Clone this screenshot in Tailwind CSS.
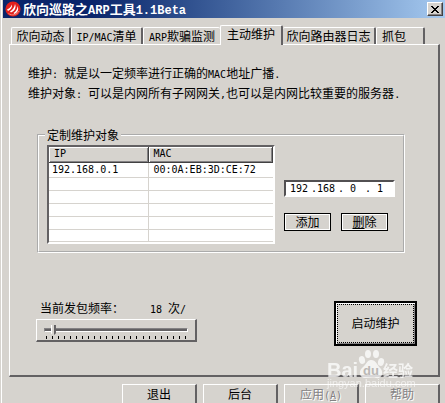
<!DOCTYPE html>
<html lang="zh-CN">
<head>
    <meta charset="UTF-8">
    <meta name="viewport" content="width=device-width, initial-scale=1.0">
    <title>欣向巡路之ARP工具1.1Beta</title>
    <script src="https://cdn.jsdelivr.net/npm/@tailwindcss/browser@4"></script>
</head>
<body class="min-h-screen bg-[#d6d3ce] font-['Noto_Sans_CJK_SC',sans-serif] text-[12px] leading-[14px] text-black">
    <div class="relative ml-px min-h-screen border-l border-white">
        <!-- Title bar -->
        <header class="ml-px flex h-[18px] items-center bg-linear-to-r from-[#0a246a] from-20% to-[#a6caf0] pr-[2px] pl-[2px]">
            <svg class="size-4 shrink-0" viewBox="0 0 16 16" aria-hidden="true">
                <circle cx="8" cy="8" r="7.6" fill="#e0201c"/>
                <path d="M2 8.5C4 8 6 6 7 3.500C7.500 6 6 8.500 3 10ZM5 10.500C8 9 9.500 6 10 3C11.500 6 10 10 6 11.500ZM8.500 12C11 10.500 12.500 8 12.500 5C14 8 13 11.500 9.500 13Z" fill="#fff"/>
                <path d="M3.500 12.500C7 15 12 14 14 10" stroke="#f58a80" fill="none"/>
            </svg>
            <h1 class="ml-[2px] h-[18px] flex-1 text-[13px] leading-[18px] font-bold whitespace-nowrap text-white">欣向巡路之<span class="font-['Liberation_Mono',monospace] text-[12px] leading-[14px]">ARP</span>工具<span class="font-['Liberation_Mono',monospace] text-[12px] leading-[14px]">1.1Beta</span></h1>
            <button aria-label="关闭" class="flex h-[14px] w-4 items-center justify-center border border-t-white border-r-[#424142] border-b-[#424142] border-l-white bg-[#d6d3ce] shadow-[inset_-1px_-1px_#848284]">
                <svg class="h-[7px] w-2" viewBox="0 0 8 7" shape-rendering="crispEdges" aria-hidden="true">
                    <path d="M0 0h2v1h1v1h2V1h1V0h2v1H7v1H6v1H5v1h1v1h1v1h1v1H6V6H5V5H3v1H2v1H0V6h1V5h1V4h1V3H2V2H1V1H0z" fill="#000"/>
                </svg>
            </button>
        </header>

        <!-- Tabs -->
        <nav role="tablist" class="mt-[7px] ml-[9px] flex h-[19px] items-end whitespace-nowrap">
            <button role="tab" class="h-[17px] w-[60px] rounded-t-[2px] border-t border-r-2 border-l border-t-white border-r-[#636163] border-l-white">欣向动态</button>
            <button role="tab" class="h-[17px] w-[72px] rounded-t-[2px] border-t border-r-2 border-l border-t-white border-r-[#636163] border-l-white"><span class="font-['DejaVu_Sans_Mono',monospace] text-[10px] leading-[10px]">IP/MAC</span>清单</button>
            <button role="tab" class="h-[17px] w-[77px] rounded-t-[2px] border-t border-l border-white"><span class="font-['DejaVu_Sans_Mono',monospace] text-[10px] leading-[10px]">ARP</span>欺骗监测</button>
            <button role="tab" aria-selected="true" class="z-10 -mb-px h-5 w-[63px] rounded-t-[2px] border-t border-r-2 border-l border-t-white border-r-[#636163] border-l-white bg-[#d6d3ce] pb-[3px]">主动维护</button>
            <button role="tab" class="h-[17px] w-[93px] rounded-t-[2px] border-t border-r-2 border-t-white border-r-[#636163]">欣向路由器日志</button>
            <button role="tab" class="h-[17px] w-[49px] rounded-t-[2px] border-t border-r-2 border-l border-t-white border-r-[#636163] border-l-white pr-3">抓包</button>
        </nav>

        <main class="mr-[5px] ml-[7px] border-t border-r-2 border-b-2 border-l border-t-white border-r-[#636163] border-b-[#636163] border-l-white pt-[18px] pb-[29px]">
            <div class="pl-[18px] leading-[20px] whitespace-nowrap">
                <p>维护<span class="font-['DejaVu_Sans_Mono',monospace] text-[10px] leading-[10px]">: </span>就是以一定频率进行正确的<span class="font-['DejaVu_Sans_Mono',monospace] text-[10px] leading-[10px]">MAC</span>地址广播<span class="font-['DejaVu_Sans_Mono',monospace] text-[10px] leading-[10px]">.</span></p>
                <p>维护对象<span class="font-['DejaVu_Sans_Mono',monospace] text-[10px] leading-[10px]">: </span>可以是内网所有子网网关<span class="font-['DejaVu_Sans_Mono',monospace] text-[10px] leading-[10px]">,</span>也可以是内网比较重要的服务器<span class="font-['DejaVu_Sans_Mono',monospace] text-[10px] leading-[10px]">.</span></p>
            </div>

            <fieldset class="mt-[25px] mr-[33px] ml-[27px] border-2 border-white [border-style:groove] pt-[3px] pr-2 pb-[7px] pl-2">
                <legend class="ml-[-2px] px-[2px]">定制维护对象</legend>
                <div class="flex gap-[9px]">
                    <div class="min-w-0 flex-1 border-2 border-t-[#636163] border-r-white border-b-white border-l-[#636163] bg-white">
                        <table class="w-full table-fixed border-collapse font-['DejaVu_Sans_Mono',monospace] text-[10px]">
                            <thead>
                                <tr class="h-[15px] bg-[#d6d3ce] text-left">
                                    <th class="w-[99px] border-r border-b border-[#424142] p-0 pl-[5px] font-normal shadow-[inset_1px_1px_#fff,inset_-1px_-1px_#848284]">IP</th>
                                    <th class="border-r border-b border-[#424142] p-0 pl-[5px] font-normal shadow-[inset_1px_1px_#fff,inset_-1px_-1px_#848284]">MAC</th>
                                </tr>
                            </thead>
                            <tbody>
                                <tr class="h-[15px] leading-[14px]"><td class="border-r border-b border-[#d6d3ce] p-0 pl-[3px]">192.168.0.1</td><td class="border-b border-[#d6d3ce] p-0 pl-[5px]">00:0A:EB:3D:CE:72</td></tr>
                                <tr class="h-[13px]"><td class="border-r border-b border-[#d6d3ce] p-0"></td><td class="border-b border-[#d6d3ce] p-0"></td></tr>
                                <tr class="h-[13px]"><td class="border-r border-b border-[#d6d3ce] p-0"></td><td class="border-b border-[#d6d3ce] p-0"></td></tr>
                                <tr class="h-[13px]"><td class="border-r border-b border-[#d6d3ce] p-0"></td><td class="border-b border-[#d6d3ce] p-0"></td></tr>
                                <tr class="h-[13px]"><td class="border-r border-b border-[#d6d3ce] p-0"></td><td class="border-b border-[#d6d3ce] p-0"></td></tr>
                                <tr class="h-[12px]"><td class="border-r border-b border-[#d6d3ce] p-0"></td><td class="border-b border-[#d6d3ce] p-0"></td></tr>
                            </tbody>
                        </table>
                    </div>
                    <div class="w-[111px] shrink-0 pt-[35px]">
                        <div class="flex h-[17px] items-center border-2 border-t-[#525052] border-r-white border-b-white border-l-[#525052] bg-white pl-1 font-['DejaVu_Sans_Mono',monospace] text-[10px]">
                            <input aria-label="IP 1" value="192" class="w-[21px]">
                            <span>.</span>
                            <input aria-label="IP 2" value="168" class="w-[21px]">
                            <span>.</span>
                            <input aria-label="IP 3" value="0" class="w-[21px] pl-[6px]">
                            <span>.</span>
                            <input aria-label="IP 4" value="1" class="w-[18px] pl-[6px]">
                        </div>
                        <div class="mt-4 flex gap-[10px]">
                            <button class="h-[18px] w-[47px] border border-black shadow-[inset_1px_1px_#fff,inset_-1px_-1px_#fff]">添加</button>
                            <button class="h-[18px] w-[47px] border border-black shadow-[inset_1px_1px_#fff,inset_-1px_-1px_#fff]"><u>删</u>除</button>
                        </div>
                    </div>
                </div>
            </fieldset>

            <div class="mt-12 mr-[21px] ml-[26px] flex items-start justify-between">
                <div class="w-[161px]">
                    <label for="rate" class="flex h-[14px] justify-between pr-[11px] pl-1">
                        <span>当前发包频率：</span>
                        <span><span class="font-['DejaVu_Sans_Mono',monospace] text-[10px] leading-[10px]">18 </span>次<span class="font-['DejaVu_Sans_Mono',monospace] text-[10px] leading-[10px]">/</span></span>
                    </label>
                    <div class="mt-1 h-[23px] border-t border-r-2 border-b-2 border-l border-t-white border-r-[#636163] border-b-[#636163] border-l-white px-[7px] pt-1">
                        <input id="rate" type="range" min="0" max="23" value="1" class="block h-3 w-full appearance-none bg-transparent [&::-webkit-slider-runnable-track]:h-1 [&::-webkit-slider-runnable-track]:border [&::-webkit-slider-runnable-track]:border-t-[#848284] [&::-webkit-slider-runnable-track]:border-r-white [&::-webkit-slider-runnable-track]:border-b-white [&::-webkit-slider-runnable-track]:border-l-[#848284] [&::-webkit-slider-runnable-track]:bg-[#636163] [&::-webkit-slider-thumb]:-mt-1 [&::-webkit-slider-thumb]:h-[11px] [&::-webkit-slider-thumb]:w-[5px] [&::-webkit-slider-thumb]:appearance-none [&::-webkit-slider-thumb]:bg-[linear-gradient(to_right,#fff_1px,#d6d3ce_1px,#d6d3ce_3px,#636163_3px)] [&::-webkit-slider-thumb]:[clip-path:polygon(0_0,100%_0,100%_80%,50%_100%,0_80%)]">
                        <div id="ticks" class="flex justify-between px-[2px]"></div>
                    </div>
                </div>
                <button class="h-[45px] w-[83px] border-2 border-black p-px shadow-[inset_1px_1px_#fff,inset_-1px_-1px_#848284]">
                    <span class="flex h-full items-center justify-center border border-dotted border-black">启动维护</span>
                </button>
            </div>
        </main>

        <footer class="mt-[7px] mr-[5px] flex justify-end gap-[6px]">
            <button class="h-5 w-[75px] border-t border-r-2 border-b border-l border-t-white border-r-[#636163] border-b-[#636163] border-l-white">退出</button>
            <button class="h-5 w-[75px] border-t border-r-2 border-b border-l border-t-white border-r-[#636163] border-b-[#636163] border-l-white">后台</button>
            <button disabled class="h-5 w-[75px] border-t border-r-2 border-b border-l border-t-white border-r-[#636163] border-b-[#636163] border-l-white text-[#848284] text-shadow-[1px_1px_#fff]">应用<span class="font-['DejaVu_Sans_Mono',monospace] text-[10px] leading-[10px]">(<u>A</u>)</span></button>
            <button disabled class="h-5 w-[75px] border-t border-r-2 border-b border-l border-t-white border-r-[#636163] border-b-[#636163] border-l-white text-[#848284] text-shadow-[1px_1px_#fff]">帮助</button>
        </footer>

        <!-- Watermark -->
        <svg class="pointer-events-none absolute right-[27px] bottom-3 h-[43px] w-[92px]" viewBox="0 0 92 43" fill="#fff" aria-hidden="true">
            <g opacity=".75">
                <text x="1" y="28" font-family="Liberation Sans, sans-serif" font-size="20" font-weight="bold">Bai</text>
                <ellipse cx="36" cy="11" rx="3" ry="4" transform="rotate(-15 36 11)"/>
                <ellipse cx="42" cy="5" rx="3" ry="4"/>
                <ellipse cx="50" cy="5" rx="3" ry="4"/>
                <ellipse cx="55" cy="13" rx="3" ry="4" transform="rotate(15 55 13)"/>
                <path d="M45 11C41 11 40 16 36 19C32 23 34 29 39 29C43 29 47 28 50 29C55 30 58 25 55 20C51 16 50 11 45 11Z"/>
                <text x="57" y="27" font-family="Noto Sans CJK SC, sans-serif" font-size="15" font-weight="bold">经验</text>
            </g>
            <text x="1" y="38" font-family="Liberation Sans, sans-serif" font-size="11" opacity=".6">jingyan.baidu.com</text>
            <text x="37" y="26" font-family="Liberation Sans, sans-serif" font-size="13" font-weight="bold" fill="#bab8b5">du</text>
        </svg>
    </div>

    <script>
        const ticks = document.getElementById('ticks');
        for (let i = 0; i < 24; i++) {
            const tick = document.createElement('span');
            tick.className = 'h-[3px] w-px bg-black';
            ticks.appendChild(tick);
        }
    </script>
</body>
</html>
